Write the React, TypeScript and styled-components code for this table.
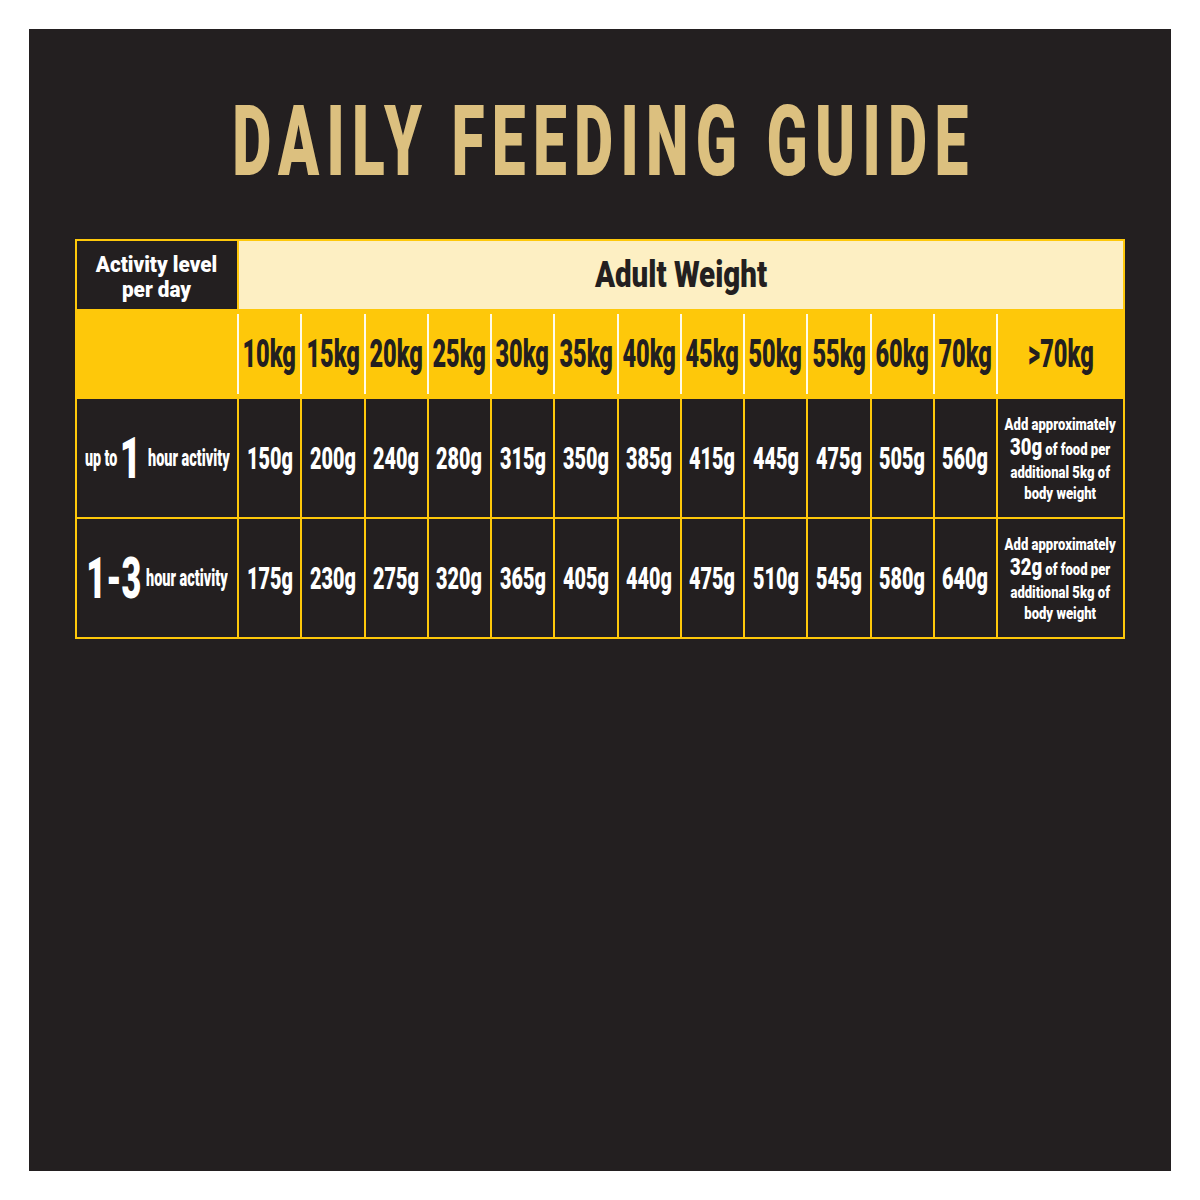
import React from "react";
import styled, { createGlobalStyle } from "styled-components";

const Global = createGlobalStyle`
  html, body { margin: 0; padding: 0; background: #ffffff; }
  body { font-family: Roboto, "Liberation Sans", sans-serif; }
`;

const DARK = "#231f20";
const YELLOW = "#fec80a";
const CREAM = "#fdefc3";
const GOLD = "#dcc07f";

const Page = styled.div`
  width: 1200px;
  height: 1200px;
  padding: 29px;
  box-sizing: border-box;
  overflow: hidden;
`;

const Panel = styled.div`
  width: 1142px;
  height: 1142px;
  background: ${DARK};
  box-sizing: border-box;
  padding: 63px 46px 0;
  display: flex;
  flex-direction: column;
  align-items: stretch;
  font-family: Roboto, "Liberation Sans", sans-serif;
  font-weight: 900;
`;

/* horizontally condensed text: the font is squeezed to match the condensed face */
const Squeeze = styled.span<{ $sx: number }>`
  display: inline-block;
  white-space: nowrap;
  transform: scaleX(${(p) => p.$sx});
  transform-origin: center;
`;

/* a slot of fixed visual width that holds squeezed text */
const Slot = styled.span<{ $w: number; $gap?: number }>`
  display: inline-flex;
  justify-content: center;
  width: ${(p) => p.$w}px;
  margin-right: ${(p) => p.$gap ?? 0}px;
  flex: none;
`;

const TitleRow = styled.div`
  display: flex;
  justify-content: center;
  height: 98px;
  margin-bottom: 49px;
`;

const Title = styled(Squeeze)`
  color: ${GOLD};
  font-size: 99px;
  line-height: 98px;
  letter-spacing: 12px;
  padding-left: 12px;
`;

const Table = styled.div`
  display: grid;
  grid-template-columns: 160px repeat(12, minmax(0, 1fr)) 125px;
  grid-template-rows: 68px 86px 118px 118px;
  gap: 2px;
  padding: 2px;
  background: ${YELLOW};
`;

const Cell = styled.div<{ $bg: string; $span?: number }>`
  background: ${(p) => p.$bg};
  grid-column: ${(p) => (p.$span ? `span ${p.$span}` : "auto")};
  display: flex;
  align-items: center;
  justify-content: center;
  text-align: center;
  position: relative;
  min-width: 0;
`;

const HeadLabel = styled(Cell)`
  color: #ffffff;
  font-size: 22px;
  line-height: 25px;
  padding-top: 3px;
  box-sizing: border-box;
`;

const Lines = styled(Squeeze)`
  display: inline-flex;
  flex-direction: column;
  align-items: center;
`;

const AdultWeight = styled(Cell)`
  color: ${DARK};
  font-size: 36px;
  line-height: 1;
`;

const WeightHead = styled(Cell)`
  color: ${DARK};
  font-size: 38px;
  line-height: 1;
  &::before {
    content: "";
    position: absolute;
    left: -2px;
    top: 3px;
    bottom: 3px;
    width: 2px;
    background: #fffbea;
  }
`;

const Value = styled(Cell)`
  color: #ffffff;
  font-size: 32px;
  line-height: 1;
`;

const RowLabel = styled(Cell)`
  color: #ffffff;
`;

const Small = styled(Slot)`
  font-size: 23px;
  line-height: 1;
`;

const Big = styled(Slot)`
  font-size: 57px;
  line-height: 1;
`;

const Note = styled(Cell)`
  color: #ffffff;
  font-size: 17px;
  line-height: 21px;
  padding-top: 1px;
  box-sizing: border-box;
`;

const NoteAmount = styled.span`
  font-size: 24px;
  line-height: 25px;
`;

const NoteLine = styled.span<{ $tall?: boolean }>`
  display: block;
  line-height: ${(p) => (p.$tall ? "25px" : "21px")};
`;

const weights = ["10kg", "15kg", "20kg", "25kg", "30kg", "35kg", "40kg", "45kg", "50kg", "55kg", "60kg", "70kg"];
const row1 = ["150g", "200g", "240g", "280g", "315g", "350g", "385g", "415g", "445g", "475g", "505g", "560g"];
const row2 = ["175g", "230g", "275g", "320g", "365g", "405g", "440g", "475g", "510g", "545g", "580g", "640g"];

const NoteText: React.FC<{ amount: string }> = ({ amount }) => (
  <Lines $sx={0.77}>
    <NoteLine>Add approximately</NoteLine>
    <NoteLine $tall>
      <NoteAmount>{amount}</NoteAmount> of food per
    </NoteLine>
    <NoteLine>additional 5kg of</NoteLine>
    <NoteLine>body weight</NoteLine>
  </Lines>
);

export default function App() {
  return (
    <>
      <Global />
      <Page>
        <Panel>
          <TitleRow>
            <Title $sx={0.61}>DAILY FEEDING GUIDE</Title>
          </TitleRow>
          <Table>
            <HeadLabel $bg={DARK}>
              <Lines $sx={0.94}>
                <span>Activity level</span>
                <span>per day</span>
              </Lines>
            </HeadLabel>
            <AdultWeight $bg={CREAM} $span={13}>
              <Squeeze $sx={0.82}>Adult Weight</Squeeze>
            </AdultWeight>

            <Cell $bg={YELLOW} />
            {weights.map((w) => (
              <WeightHead key={w} $bg={YELLOW}>
                <Squeeze $sx={0.62}>{w}</Squeeze>
              </WeightHead>
            ))}
            <WeightHead $bg={YELLOW}>
              <Squeeze $sx={0.62}>&gt;70kg</Squeeze>
            </WeightHead>

            <RowLabel $bg={DARK}>
              <Small $w={32} $gap={6}>
                <Squeeze $sx={0.62}>up to</Squeeze>
              </Small>
              <Big $w={14} $gap={11}>
                <Squeeze $sx={0.65}>1</Squeeze>
              </Big>
              <Small $w={80}>
                <Squeeze $sx={0.63}>hour activity</Squeeze>
              </Small>
            </RowLabel>
            {row1.map((v, i) => (
              <Value key={i} $bg={DARK}>
                <Squeeze $sx={0.62}>{v}</Squeeze>
              </Value>
            ))}
            <Note $bg={DARK}>
              <NoteText amount="30g" />
            </Note>

            <RowLabel $bg={DARK}>
              <Big $w={53} $gap={7}>
                <Squeeze $sx={0.6}>1-3</Squeeze>
              </Big>
              <Small $w={80}>
                <Squeeze $sx={0.63}>hour activity</Squeeze>
              </Small>
            </RowLabel>
            {row2.map((v, i) => (
              <Value key={i} $bg={DARK}>
                <Squeeze $sx={0.62}>{v}</Squeeze>
              </Value>
            ))}
            <Note $bg={DARK}>
              <NoteText amount="32g" />
            </Note>
          </Table>
        </Panel>
      </Page>
    </>
  );
}
